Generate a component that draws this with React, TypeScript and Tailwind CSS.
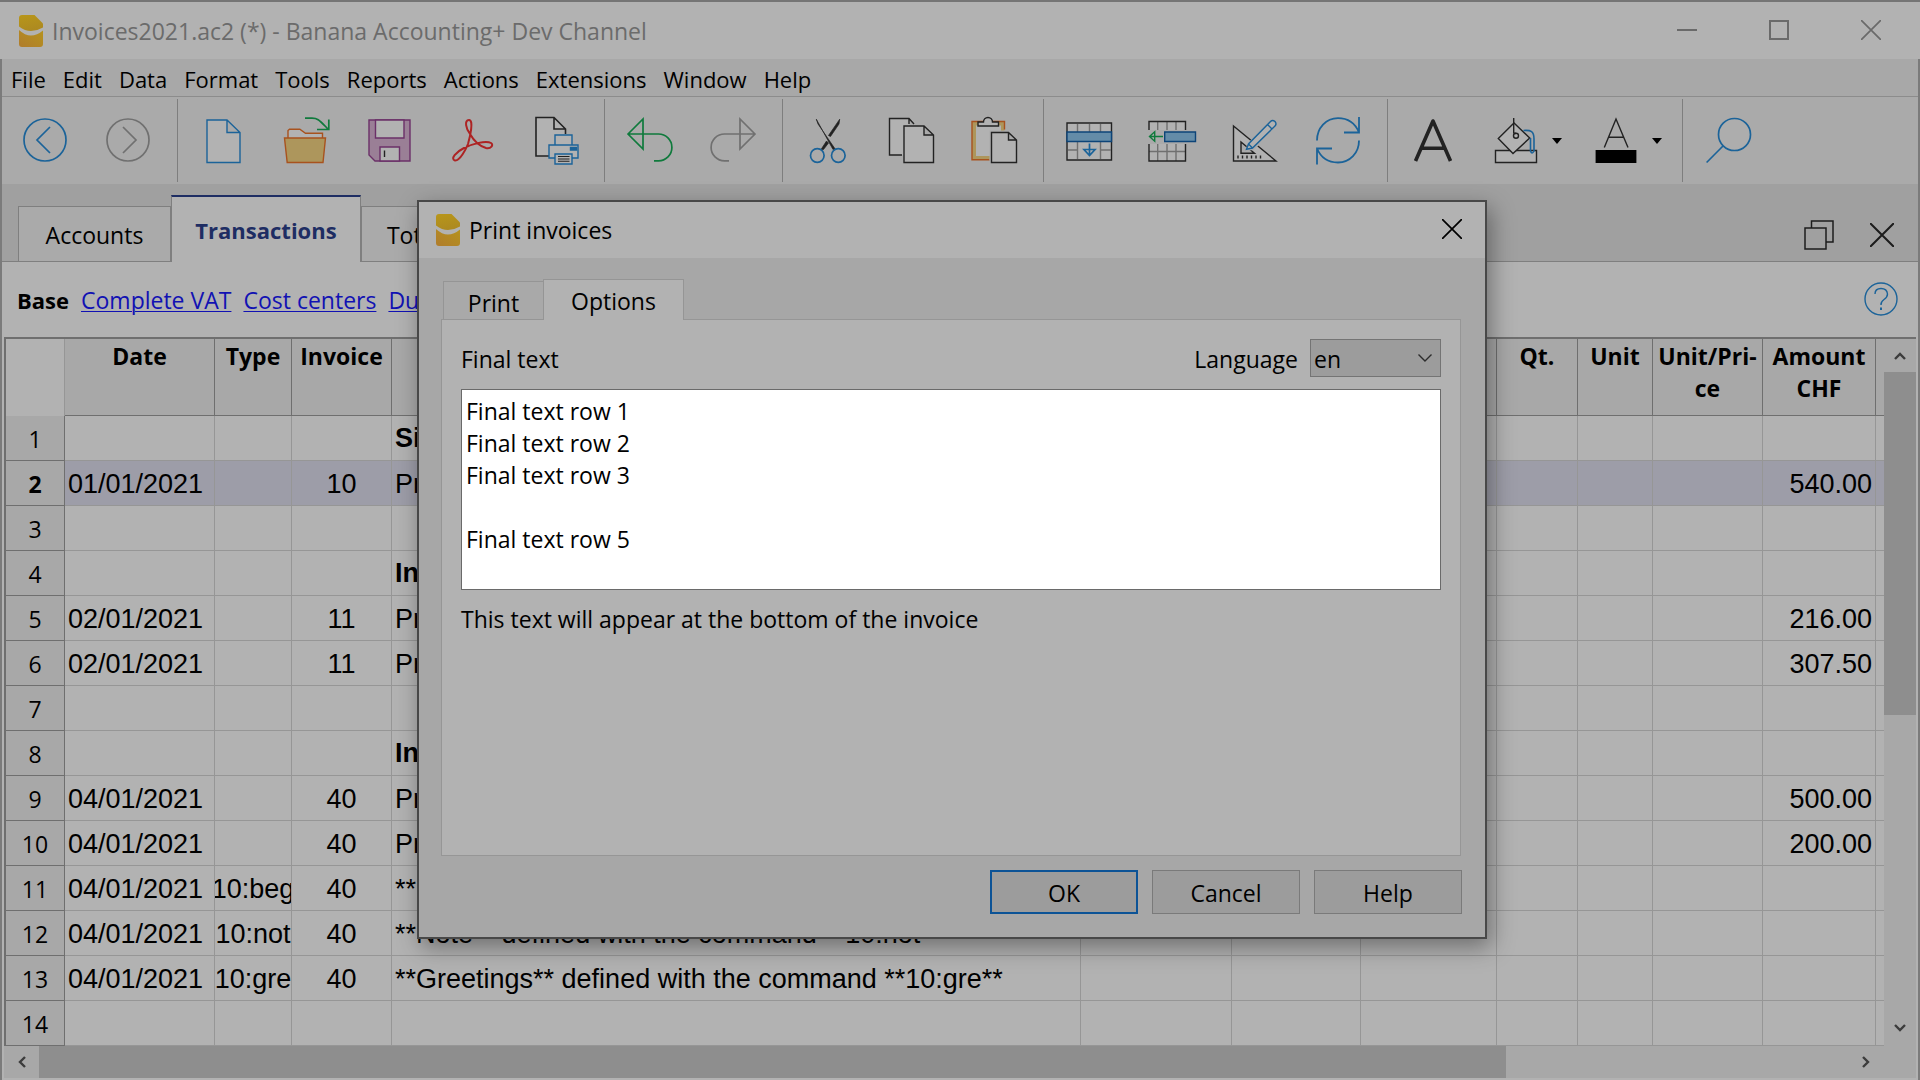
import React, { useState } from "react";

const UI_FONT = "font-['Open_Sans','Noto_Sans',sans-serif]";

function Icon({ children }: { children: React.ReactNode }) {
  return (
    <svg viewBox="0 0 48 48" className="size-12 shrink-0 overflow-visible" fill="none" strokeWidth="1.4" aria-hidden="true">
      {children}
    </svg>
  );
}

const BLUE = "#1b6399";
const GREEN = "#0f7a3c";
const GRAY = "#707070";
const DARK = "#222222";
const PAPER = "#b2b2b2";

const icons: Record<string, React.ReactNode> = {
  Back: (
    <g stroke={BLUE} strokeWidth="1.7">
      <circle cx="24" cy="23" r="21" />
      <path d="M29 10 16 23 29 36" />
    </g>
  ),
  Forward: (
    <g stroke={GRAY} strokeWidth="1.7">
      <circle cx="24" cy="23" r="21" />
      <path d="M19 10 32 23 19 36" />
    </g>
  ),
  New: (
    <path d="M8 3H28L41 15.500V45.500H8ZM28 3V15.500H41" stroke={BLUE} fill={PAPER} />
  ),
  Open: (
    <>
      <path d="M23 1.200H30C36 1.200 37 3 46.500 12.500M46.800 2.500V12.500H35" stroke={GREEN} strokeWidth="1.700" />
      <path d="M6 21V13.500L7.500 12.200H17.800L23.500 16.200H40.500V21" stroke="#a8521e" fill={PAPER} />
      <path d="M2.500 21H43.500L41 45.500H5.200Z" stroke="#a8521e" fill="#ad965c" />
    </>
  ),
  Save: (
    <g stroke="#6b3068">
      <path d="M4 3H45V44H10L4 38Z" fill="#9a7f96" />
      <path d="M10.500 3H39V21H10.500ZM15 30H34.500V44H15Z" fill={PAPER} />
      <path d="M19.500 33.500V40" stroke={DARK} />
    </g>
  ),
  "Create PDF": (
    <path
      d="M21 3C16 3 18 12 22 17C26 24 31 29 38 31C43 32 46 28 43 26C38 23 24 27 16 31C8 35 2 42 7 43.500C12 44 18 32 20 27C22 20 26 3 21 3Z"
      stroke="#ad2323"
      strokeWidth="2"
    />
  ),
  Print: (
    <>
      <path d="M5 .5H23L34.500 12V39H5Z" fill={PAPER} />
      <path d="M34.500 17V12L23 .5H5V39H18M23 .5V12H34.500" stroke={DARK} strokeWidth="1.600" />
      <g stroke={BLUE} fill={PAPER}>
        <path d="M24 18H41V28H24ZM18 28H47V41H18Z" />
        <path d="M24 37H41V47H24Z" />
        <path d="M39.500 30.500H45.500V33H39.500Z" fill={BLUE} />
      </g>
      <path d="M27 39.500H38.500M27 42H38.500M27 44.300H38.500" stroke={DARK} strokeWidth="1.100" />
    </>
  ),
  Undo: (
    <path d="M2 17 17 2V32ZM2 17H32.500A13.400 13.400 0 0 1 32.500 43.800H28" stroke={GREEN} strokeWidth="1.700" />
  ),
  Redo: (
    <path d="M46 17 31 2V32ZM46 17H15.500A13.400 13.400 0 0 0 15.500 43.800H20" stroke={GRAY} strokeWidth="1.700" />
  ),
  Cut: (
    <>
      <path d="M12.300 2.200 14 7 31.500 32.500H29ZM35.700 2.200 35 7 26.500 19.500 24.500 18.500ZM22.500 24 24.500 26 19.500 32.500H17Z" fill={DARK} stroke={DARK} strokeWidth=".7" />
      <circle cx="13.300" cy="38.500" r="6.800" stroke={BLUE} strokeWidth="1.700" />
      <circle cx="34.300" cy="38.500" r="6.800" stroke={BLUE} strokeWidth="1.700" />
    </>
  ),
  Copy: (
    <g stroke={DARK}>
      <path d="M2.500 1.500H22V9H17V38H2.500Z" fill={PAPER} stroke="none" />
      <path d="M15 38H2.500V1.500H22L27 7M22 1.500V7" />
      <path d="M17 9H37L46.500 18V45.500H17ZM37 9V18H46.500" fill={PAPER} />
    </g>
  ),
  Paste: (
    <>
      <path d="M2 4.500H34.500V42.500H2Z" fill="#ad965c" />
      <path d="M6 8.500H31V39H6Z" fill={PAPER} />
      <path d="M34.500 12.500V4.500H2V42.800H19.500" stroke="#a8521e" />
      <path d="M19.500 13.500H36V43H19.500Z" fill="#aaaaaa" />
      <path d="M8 5H13.500A4.500 4.500 0 0 1 22.500 5H28.500V9H8Z" stroke={DARK} fill={PAPER} />
      <path d="M21.500 15.500H38.500L46.500 23V45.500H21.500ZM38.500 15.500V23H46.500" stroke={DARK} fill={PAPER} />
    </>
  ),
  "Insert rows": (
    <>
      <path d="M2 6H46.500V43H2Z" fill={PAPER} stroke={DARK} />
      <path d="M12.500 7V42M35.500 7V42M24.500 7V15M3 33H12.500M35.500 33H46" stroke={GRAY} />
      <path d="M2 15H46.500V24.500H2Z" fill="#648ca8" stroke="#0d4478" />
      <path d="M24.500 26.500V38.500M19 32.500H30L24.500 38.500Z" stroke={BLUE} strokeWidth="1.700" />
    </>
  ),
  "Delete rows": (
    <>
      <path d="M1 5H37V13H1ZM1 27H37V44H1Z" fill={PAPER} />
      <path d="M9.700 5V13M19 5V13M28 5V13M9.700 27V44M19 27V44M28 27V44M1 34.500H37" stroke={GRAY} />
      <path d="M1 13V4.500H37.500V13M1 27V44H37.500V27" stroke={DARK} />
      <path d="M16.700 15H47.500V24.500H16.700Z" fill="#648ca8" stroke="#0d4478" />
      <path d="M15 19.500H1.500M6.700 14.800V24.200L1.500 19.500Z" stroke={GREEN} />
    </>
  ),
  "Design mode": (
    <>
      <path d="M2.500 9 45 44H2.500Z" fill={PAPER} stroke={DARK} />
      <path d="M10 25V36.300H23.500Z" fill="#aaaaaa" stroke={DARK} />
      <path d="M7 38.500V41.500M11.500 38.500V41.500M16 38.500V41.500M20.500 38.500V41.500M25 38.500V41.500M29.500 38.500V41.500" stroke={DARK} />
      <path d="M14 34 17 26 38 4 46 10 23 33Z" fill="#aaaaaa" />
      <path d="M15.500 32.300 17.500 27 39.500 4.500Q41.500 2.300 44 4.500Q46 7 44 9L21.500 31ZM17.500 27 21.500 31M36.500 7.500 41 12" fill={PAPER} stroke={BLUE} />
    </>
  ),
  Recalculate: (
    <path
      d="M3 23.500C3 11 12 1.200 24 1.200C33 1.200 41 6 45 15.500M45 0V15.500H30M45 23.500C45 36 36 45.500 24 45.500C15 45.500 7 41 3 31.500M18 31.500H3V47.500"
      stroke={BLUE}
      strokeWidth="1.800"
    />
  ),
  Bold: <path d="M6.500 44 24 4 41.500 44M12 31.200H36" stroke={DARK} strokeWidth="3.600" strokeLinejoin="round" />,
  "Background color": (
    <>
      <path d="M3.500 33.500H44.500V45.500H3.500Z" fill={PAPER} stroke={DARK} />
      <path d="M6.300 21.500 22 6 37.700 21 21 36.500Z" fill={PAPER} stroke={DARK} />
      <path d="M31.500 13.500C39 13 42 14 42 22V34Q40 38 38.500 34V21" stroke={BLUE} strokeWidth="1.600" />
      <path d="M21.700 1V16L24 16.500" stroke={DARK} />
      <circle cx="24" cy="18.800" r="2.500" stroke={DARK} />
    </>
  ),
  "Text color": (
    <>
      <path d="M12.300 30.500 24 2 36 30.500M16.500 20.300H32" stroke={DARK} />
      <path d="M3.600 33H44.400V46H3.600Z" fill="#000000" />
    </>
  ),
  Find: (
    <g stroke={BLUE} strokeWidth="1.700">
      <circle cx="30.500" cy="17.500" r="16" fill="#adadad" />
      <path d="M19 29 2.600 45.500" />
    </g>
  ),
};

const toolGroups = [
  ["Back", "Forward"],
  ["New", "Open", "Save", "Create PDF", "Print"],
  ["Undo", "Redo"],
  ["Cut", "Copy", "Paste"],
  ["Insert rows", "Delete rows", "Design mode", "Recalculate"],
  ["Bold", "Background color", "Text color"],
  ["Find"],
];

const withMenu = ["Background color", "Text color"];

const menus = ["File", "Edit", "Data", "Format", "Tools", "Reports", "Actions", "Extensions", "Window", "Help"];

const headers = ["Date", "Type", "Invoice", "Description", "", "", "", "Qt.", "Unit", "Unit/Pri-\nce", "Amount\nCHF", ""];

type Row = { date?: string; type?: string; invoice?: string; text?: string; title?: boolean; amount?: string };

const rows: Row[] = [
  { text: "Simple invoice", title: true },
  { date: "01/01/2021", invoice: "10", text: "Product", amount: "540.00" },
  {},
  { text: "Invoice", title: true },
  { date: "02/01/2021", invoice: "11", text: "Product", amount: "216.00" },
  { date: "02/01/2021", invoice: "11", text: "Product", amount: "307.50" },
  {},
  { text: "Invoice", title: true },
  { date: "04/01/2021", invoice: "40", text: "Product", amount: "500.00" },
  { date: "04/01/2021", invoice: "40", text: "Product", amount: "200.00" },
  { date: "04/01/2021", type: "10:beg", invoice: "40", text: "**Begin**" },
  { date: "04/01/2021", type: "10:not", invoice: "40", text: "**Note** defined with the command **10:not**" },
  { date: "04/01/2021", type: "10:gre", invoice: "40", text: "**Greetings** defined with the command **10:gre**" },
  {},
];

function Logo() {
  return (
    <svg viewBox="0 0 24 32" className="h-8 w-6 shrink-0" aria-hidden="true">
      <defs>
        <linearGradient id="logo-top" x1="0" y1="0" x2="0.300" y2="1">
          <stop offset="0" stopColor="#b8961a" />
          <stop offset="1" stopColor="#ad8a20" />
        </linearGradient>
        <linearGradient id="logo-bottom" x1="0" y1="1" x2="1" y2="0">
          <stop offset="0" stopColor="#b07c2c" />
          <stop offset="1" stopColor="#b5931e" />
        </linearGradient>
      </defs>
      <path d="M3 0H15.500L24 8.500V12.500Q18 16 12 16T0 11.500V3Q0 0 3 0Z" fill="url(#logo-top)" />
      <path d="M0 15Q6 20.500 12 20.500T24 15.500V29Q24 32 21 32H3Q0 32 0 29Z" fill="url(#logo-bottom)" />
    </svg>
  );
}

function Cross({ className }: { className: string }) {
  return (
    <svg viewBox="0 0 20 20" className={className} stroke="currentColor" strokeWidth="1.700" aria-hidden="true">
      <path d="M0 0 20 20M20 0 0 20" />
    </svg>
  );
}

function Chevron({ d }: { d: string }) {
  return (
    <svg viewBox="0 0 12 12" className="size-3" fill="none" stroke="#3c3c3c" strokeWidth="2.400" aria-hidden="true">
      <path d={d} />
    </svg>
  );
}

function TitleBar() {
  return (
    <header className="flex h-[59px] items-center border-t-2 border-[#757575] bg-[#b2b2b2] pr-[39px] pl-[19px]">
      <Logo />
      <h1 className="ml-[9px] text-[23px] text-[#6b6b6b]">Invoices2021.ac2 (*) - Banana Accounting+ Dev Channel</h1>
      <div className="mb-0.5 ml-auto flex items-center gap-[72px] text-[#6a6a6a]">
        <button aria-label="Minimize" className="flex h-5 w-5 items-center">
          <span className="h-[2px] w-full bg-current" />
        </button>
        <button aria-label="Maximize" className="size-5 border-2 border-current" />
        <button aria-label="Close" className="size-5">
          <Cross className="size-5" />
        </button>
      </div>
    </header>
  );
}

function Toolbar() {
  return (
    <div role="toolbar" aria-label="Main toolbar" className="flex h-[88px] border-t border-[#8c8c8c] bg-[#aaaaaa] pl-px">
      {toolGroups.map((group, i) => (
        <div key={group[0]} className="flex">
          {i > 0 && <div className="my-0.5 mr-[3px] ml-2 w-px bg-[#7e7e7e]" />}
          {group.map((name) =>
            withMenu.includes(name) ? (
              <button key={name} aria-label={name} className="flex w-[100px] items-center gap-3 pl-[18px]">
                <Icon>{icons[name]}</Icon>
                <svg viewBox="0 0 10 6" className="h-[6px] w-[10px]" aria-hidden="true">
                  <path d="M0 0H10L5 6Z" />
                </svg>
              </button>
            ) : (
              <button key={name} aria-label={name} className="flex w-[83px] items-center justify-center">
                <Icon>{icons[name]}</Icon>
              </button>
            ),
          )}
        </div>
      ))}
    </div>
  );
}

function DocumentTabs() {
  return (
    <div className="flex h-[78px] items-end border-b border-[#7f7f7f] bg-[#a0a0a0] pr-6 pl-4">
      <div role="tablist" className="-mb-px flex items-end">
        <button role="tab" aria-selected="false" className="h-14 w-[153px] border border-[#7f7f7f] bg-[#aaaaaa] pt-0.5">
          Accounts
        </button>
        <button
          role="tab"
          aria-selected="true"
          className="h-[67px] w-[190px] border-x border-t-2 border-x-[#7f7f7f] border-t-[#1e2d63] bg-[#b2b2b2] text-[22px] font-bold text-[#1e2d63]"
        >
          Transactions
        </button>
        <button role="tab" aria-selected="false" className="h-14 w-[116px] border border-[#7f7f7f] bg-[#aaaaaa] pt-0.5">
          Totals
        </button>
      </div>
      <div className="mb-[11px] ml-auto flex items-center gap-9 text-[#1c1c1c]">
        <button aria-label="Detach view" className="size-[30px]">
          <svg viewBox="0 0 30 30" className="size-[30px]" fill="none" stroke="currentColor" strokeWidth="1.500" aria-hidden="true">
            <path d="M1 8H22V29H1ZM7.500 8V1H29V22H22" />
          </svg>
        </button>
        <button aria-label="Close view" className="size-6">
          <Cross className="size-6" />
        </button>
      </div>
    </div>
  );
}

function ViewLinks() {
  return (
    <nav className="flex h-[75px] items-center gap-3 bg-[#b2b2b2] pr-5 pl-[15px]">
      <span className="text-[22px] font-bold">Base</span>
      {["Complete VAT", "Cost centers", "Due date"].map((name) => (
        <a key={name} href="#" className="text-[#1111b3] underline decoration-1 underline-offset-2">
          {name}
        </a>
      ))}
      <button aria-label="Help" className="mb-0.5 ml-auto size-[34px]">
        <svg viewBox="0 0 34 34" className="size-[34px]" fill="none" stroke={BLUE} strokeWidth="1.400" aria-hidden="true">
          <circle cx="17" cy="17" r="16" />
          <path d="M11 12Q11 6.500 17 6.500T23.500 12Q23.500 15 20 17.500T17 23" />
          <path d="M17 25.500V28" strokeWidth="2" />
        </svg>
      </button>
    </nav>
  );
}

function Ledger() {
  const cell = "overflow-hidden border-r border-b border-[#969696] p-0 whitespace-nowrap";
  const rowHead = "border-r border-b border-[#6f6f6f] bg-[#a8a8a8] p-0 pt-0.5 text-center";
  return (
    <table className="w-full table-fixed border-separate border-spacing-0">
      <colgroup>
        <col className="w-[59px]" />
        <col className="w-[150px]" />
        <col className="w-[77px]" />
        <col className="w-[100px]" />
        <col />
        <col className="w-[151px]" />
        <col className="w-[129px]" />
        <col className="w-[136px]" />
        <col className="w-[81px]" />
        <col className="w-[75px]" />
        <col className="w-[110px]" />
        <col className="w-[113px]" />
        <col className="w-2" />
      </colgroup>
      <thead>
        <tr className="h-[77px]">
          <td className="border-r border-[#969696] bg-[#b2b2b2]" />
          {headers.map((h, i) => (
            <th
              key={i}
              scope="col"
              className="border-r border-b border-[#6f6f6f] bg-[#a8a8a8] p-0 pt-px text-center align-top leading-8 font-bold whitespace-pre last:border-r-0"
            >
              {h}
            </th>
          ))}
        </tr>
      </thead>
      <tbody className="font-['Liberation_Sans',Arial,sans-serif] text-[27px] leading-8">
        {rows.map((r, i) => (
          <tr key={i} className={i === 1 ? "h-[45px] bg-[#9d9da8]" : "h-[45px] bg-[#b2b2b2]"}>
            <th
              scope="row"
              className={`${rowHead} font-['Open_Sans','Noto_Sans',sans-serif] text-[23px] ${i === 1 ? "font-bold" : "font-normal"}`}
            >
              {i + 1}
            </th>
            <td className={`${cell} pt-px pl-[3px]`}>{r.date}</td>
            <td className={`${cell} pt-px`}>
              <div className="flex justify-center">{r.type}</div>
            </td>
            <td className={`${cell} pt-px text-center`}>{r.invoice}</td>
            <td className={`${cell} pl-[3px] ${r.title ? "font-bold" : "pt-px"}`}>{r.text}</td>
            <td className={cell} />
            <td className={cell} />
            <td className={cell} />
            <td className={cell} />
            <td className={cell} />
            <td className={cell} />
            <td className={`${cell} pt-px pr-[3px] text-right`}>{r.amount}</td>
            <td className="border-b border-[#969696] p-0" />
          </tr>
        ))}
      </tbody>
    </table>
  );
}

function PrintDialog() {
  const [text, setText] = useState("Final text row 1\nFinal text row 2\nFinal text row 3\n\nFinal text row 5");
  return (
    <div
      role="dialog"
      aria-label="Print invoices"
      className="absolute top-[200px] left-[417px] flex w-[1070px] flex-col border-2 border-[#484848] bg-[#a7a7a7] shadow-[4px_8px_22px_rgba(0,0,0,0.38)]"
    >
      <div className="flex h-14 items-center bg-[#b2b2b2] pr-[23px] pl-[17px]">
        <Logo />
        <h2 className="ml-[9px]">Print invoices</h2>
        <button aria-label="Close dialog" className="mb-0.5 ml-auto size-5">
          <Cross className="size-5" />
        </button>
      </div>
      <div className="flex flex-col pt-[21px] pr-6 pb-[23px] pl-[22px]">
        <div role="tablist" className="z-10 -mb-px flex items-end pl-0.5">
          <button role="tab" aria-selected="false" className="h-[39px] w-[100px] border border-r-0 border-[#959595] bg-[#a9a9a9] pt-1">
            Print
          </button>
          <button role="tab" aria-selected="true" className="h-[41px] w-[141px] border border-b-0 border-[#959595] bg-[#b2b2b2] pt-0.5">
            Options
          </button>
        </div>
        <div role="tabpanel" className="h-[537px] border border-[#969696] bg-[#b2b2b2] px-[19px] pt-[19px]">
          <div className="flex h-[38px] items-center">
            <label htmlFor="final-text" className="pt-0.5">
              Final text
            </label>
            <label htmlFor="language" className="ml-auto pt-0.5">
              Language
            </label>
            <div className="relative ml-3">
              <select
                id="language"
                defaultValue="en"
                className="block h-[38px] w-[131px] appearance-none border border-[#747474] bg-[#9c9c9c] pt-0.5 pl-[3px]"
              >
                <option>en</option>
                <option>de</option>
                <option>fr</option>
                <option>it</option>
              </select>
              <svg
                viewBox="0 0 14 8"
                className="pointer-events-none absolute top-[15px] right-[9px] h-2 w-3.5"
                fill="none"
                stroke="#2c2c2c"
                strokeWidth="1.400"
                aria-hidden="true"
              >
                <path d="M.5 .5 7 7 13.500 .5" />
              </svg>
            </div>
          </div>
          <textarea
            id="final-text"
            value={text}
            onChange={(e) => setText(e.target.value)}
            className="mt-3 block h-[201px] w-full resize-none border border-[#6a6a6a] bg-white px-1 pt-[5px] leading-8 outline-none"
          />
          <p className="mt-[13px] leading-8">This text will appear at the bottom of the invoice</p>
        </div>
        <div className="mt-3.5 -mr-px flex justify-end gap-3.5">
          <button className="h-11 w-[148px] border-2 border-[#0c5396] bg-[#9c9c9c] pt-0.5">OK</button>
          <button className="h-11 w-[148px] border border-[#7a7a7a] bg-[#9c9c9c] pt-0.5">Cancel</button>
          <button className="h-11 w-[148px] border border-[#7a7a7a] bg-[#9c9c9c] pt-0.5">Help</button>
        </div>
      </div>
    </div>
  );
}

export default function App() {
  return (
    <div className={`relative flex min-h-screen flex-col overflow-hidden bg-[#a8a8a8] text-[23px] leading-8 text-black ${UI_FONT}`}>
      <TitleBar />
      <div className="flex grow flex-col border-x-2 border-[#7b7b7b]">
        <nav aria-label="Menu bar" className="flex h-[37px] items-center gap-[17px] pt-0.5 pl-[9px] text-[22px]">
          {menus.map((m) => (
            <button key={m}>{m}</button>
          ))}
        </nav>
        <Toolbar />
        <DocumentTabs />
        <ViewLinks />
        <main className="flex grow flex-col bg-[#b2b2b2] px-0.5">
          <div className="flex grow border-t-2 border-l-2 border-[#6f6f6f]">
            <div className="min-w-0 grow">
              <Ledger />
            </div>
            <div className="flex w-8 shrink-0 flex-col items-center bg-[#a8a8a8]">
              <button aria-label="Scroll up" className="flex h-[33px] w-full items-center justify-center">
                <Chevron d="M1 9 6 4 11 9" />
              </button>
              <div className="h-[343px] w-full bg-[#8e8e8e]" />
              <button aria-label="Scroll down" className="mt-auto flex h-9 w-full items-center justify-center">
                <Chevron d="M1 3 6 8 11 3" />
              </button>
            </div>
          </div>
          <div className="mb-0.5 flex h-8 bg-[#a8a8a8]">
            <button aria-label="Scroll left" className="flex w-[35px] items-center justify-center">
              <Chevron d="M9 1 4 6 9 11" />
            </button>
            <div className="w-[1467px] bg-[#8e8e8e]" />
            <button aria-label="Scroll right" className="mr-[34px] ml-auto flex w-8 items-center justify-center">
              <Chevron d="M3 1 8 6 3 11" />
            </button>
          </div>
        </main>
      </div>
      <PrintDialog />
    </div>
  );
}
